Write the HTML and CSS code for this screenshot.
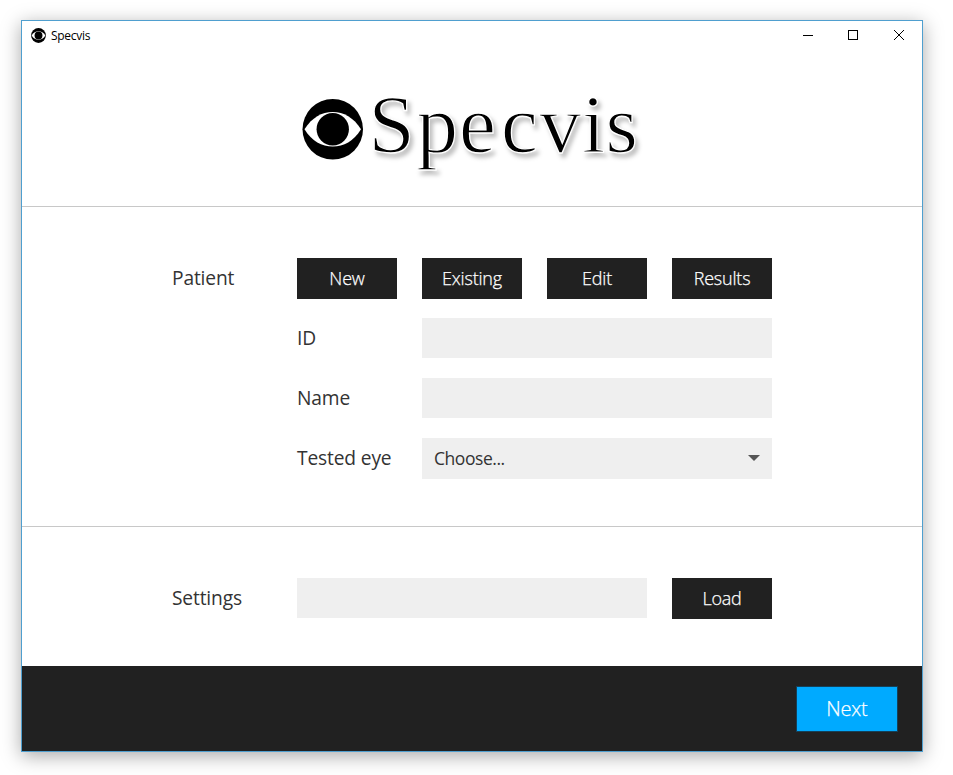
FILE: index.html
```
<!DOCTYPE html>
<html lang="en">
<head>
<meta charset="utf-8">
<title>Specvis</title>
<link rel="stylesheet" href="styles.css">
</head>
<body>
<svg width="0" height="0" class="defs">
  <symbol id="eye" viewBox="0 0 62 62">
    <circle cx="31" cy="31" r="30.5" fill="#000"/>
    <path d="M2.5 31C10 19 20 13.5 31 13.5S52 19 59.500 31C52 43 42 48.500 31 48.500S10 43 2.500 31Z" fill="#fff"/>
    <circle cx="31" cy="31" r="16.300" fill="#000"/>
  </symbol>
</svg>
<main class="window">
  <div class="titlebar">
    <svg class="app-icon"><use href="#eye"/></svg>
    <span class="app-title">Specvis</span>
    <svg class="controls" width="103" height="12" viewBox="0 0 103 12" fill="none" stroke="#000">
      <path d="M1 6.500h10"/>
      <rect x="46.500" y="1.500" width="9" height="9"/>
      <path d="M92 1l10 10M102 1L92 11"/>
    </svg>
  </div>
  <header class="logo">
    <svg width="360" height="120" viewBox="300 65 360 120">
      <use href="#eye" x="302" y="98.500" width="61.500" height="61.500"/>
      <text class="wordmark" x="368.600 416.500 459 501 539.500 582 605.500" y="152">Specvis</text>
    </svg>
  </header>
  <section class="patient">
    <div class="label">Patient</div>
    <button class="btn">New</button>
    <button class="btn">Existing</button>
    <button class="btn">Edit</button>
    <button class="btn">Results</button>
    <div class="label second">ID</div><div class="field wide"></div>
    <div class="label second">Name</div><div class="field wide"></div>
    <div class="label second">Tested eye</div>
    <div class="field wide select"><span>Choose...</span><i class="arrow"></i></div>
  </section>
  <section class="settings">
    <div class="label">Settings</div>
    <div class="field path"></div>
    <button class="btn">Load</button>
  </section>
  <footer class="footer"><button class="next">Next</button></footer>
</main>
</body>
</html>
```
FILE: styles.css
```
* { box-sizing: border-box; }
body { margin: 0; height: 775px; padding: 20px 0 0 21px; background: #fff; overflow: hidden; font-family: "Open Sans", "Noto Sans", sans-serif; }
.defs { position: absolute; }
.window { width: 902px; height: 732px; display: flex; flex-direction: column; border: 1px solid #4f9fcf; background: #fff; box-shadow: 0 4px 18px rgba(0,0,0,.34); }
.titlebar { height: 30px; display: flex; align-items: center; padding: 0 17px 2px 9px; }
.app-icon { width: 15px; height: 15px; }
.app-title { margin-left: 5px; margin-top: 1px; font-size: 12px; letter-spacing: -.3px; color: #000; }
.controls { margin-left: auto; }
.logo { height: 156px; border-bottom: 1px solid #c8c8c8; padding: 14px 0 0 278px; }
.logo svg { display: block; overflow: visible; }
.wordmark { font: 83px "Liberation Serif", serif; fill: #000; stroke: #fff; stroke-width: 1.3px; filter: drop-shadow(3px 4px 2px rgba(0,0,0,.25)); }
.patient, .settings { display: grid; grid-template-columns: repeat(5, 100px); grid-auto-rows: 40px; gap: 20px 25px; padding: 51px 0 0 150px; border-bottom: 1px solid #c8c8c8; }
.patient { height: 320px; }
.settings { height: 139px; border: 0; }
.label { font-size: 19.2px; line-height: 40px; color: #333; white-space: nowrap; letter-spacing: -.15px; }
.second { grid-column: 2; }
.btn, .next { border: 0; padding: 0; font: 18px/41px "Open Sans", "Noto Sans", sans-serif; font-weight: 300; letter-spacing: -.2px; color: #fff; background: #212121; text-align: center; -webkit-text-stroke: .25px #fff; }
.btn { height: 41px; }
.field { background: #efefef; }
.wide { grid-column: 3 / 6; }
.path { grid-column: 2 / 5; }
.select { height: 41px; display: flex; align-items: center; justify-content: space-between; padding: 0 12px 2px; font-size: 17.5px; letter-spacing: -.45px; color: #333; }
.arrow { border: 6px solid transparent; border-top-color: #555; border-bottom: 0; }
.footer { flex: 1; display: flex; justify-content: flex-end; padding: 21px 25px 0 0; background: #212121; }
.next { width: 100px; height: 44px; background: #00aaff; font-size: 20px; line-height: 44px; box-shadow: 0 0 0 1px #154058; }
```
